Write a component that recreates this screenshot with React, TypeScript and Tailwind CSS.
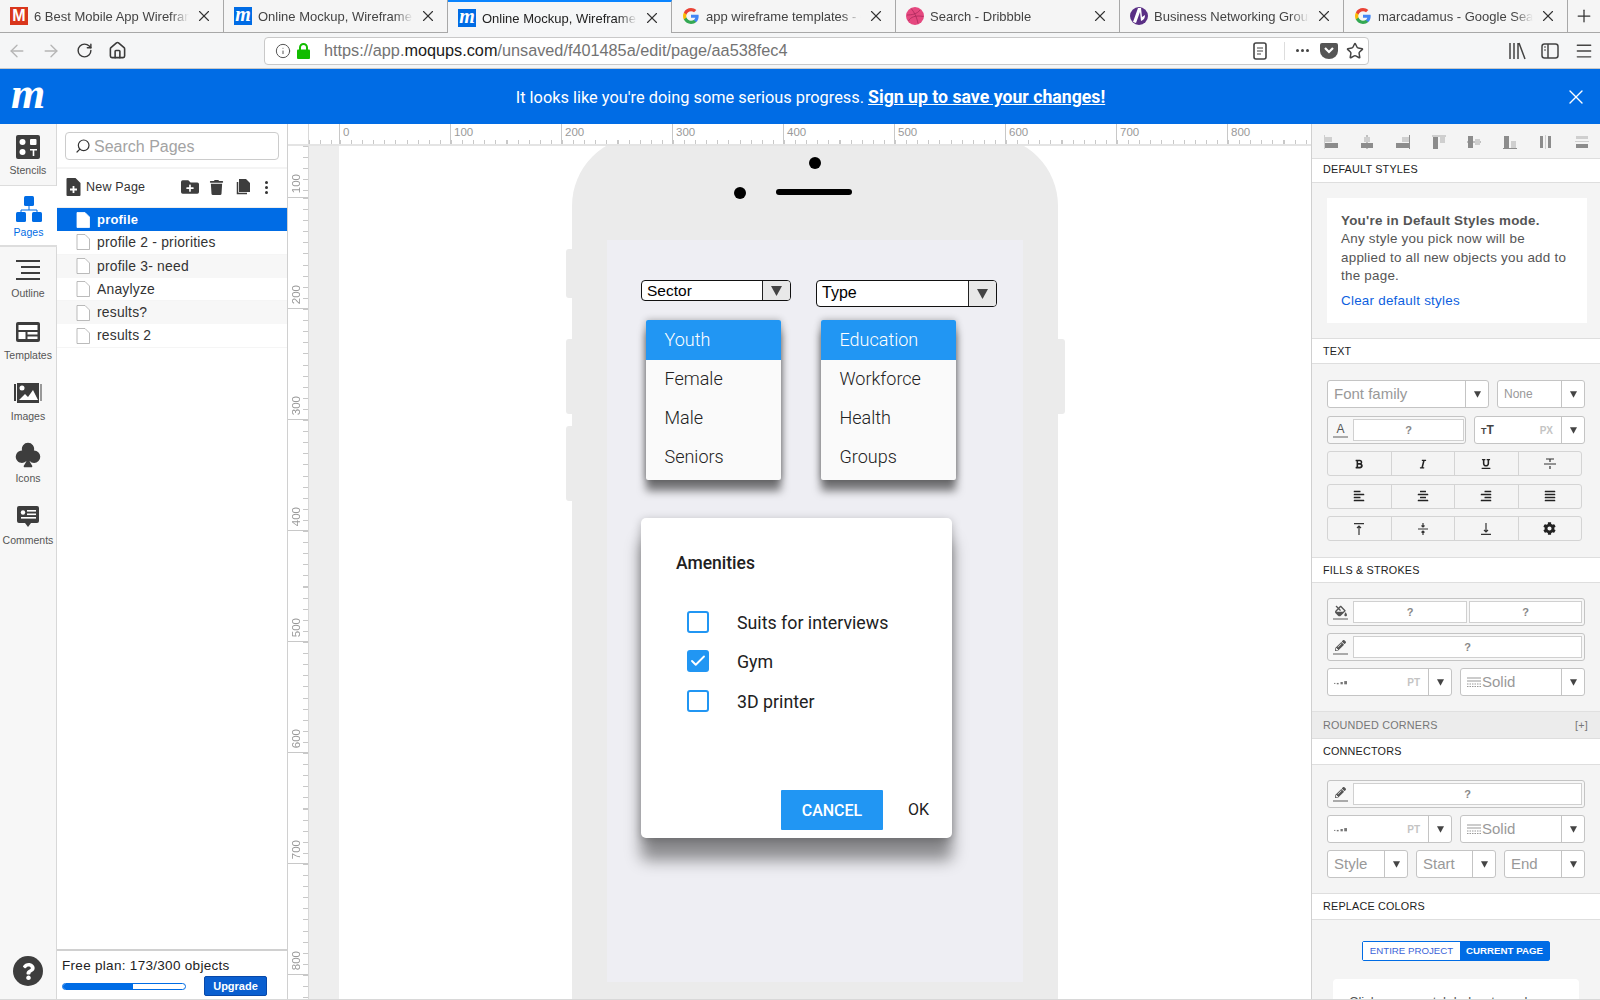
import React from "react";
import { ArrowLeft, ArrowRight, RotateCw, Home, Info, Star, X, Plus, Menu, Check, Search } from "lucide-react";
import { FaBold, FaItalic, FaUnderline, FaAlignLeft, FaAlignCenter, FaAlignRight, FaAlignJustify, FaCog, FaFolderPlus, FaTrash, FaFillDrip, FaPencilAlt, FaQuestion } from "react-icons/fa";
import { BsSuitClubFill } from "react-icons/bs";

const GoogleG = () => (
  <svg viewBox="0 0 24 24" className="w-[16px] h-[16px] shrink-0 ml-[1px] mr-[1px]">
    <path fill="#4285F4" d="M23.49 12.27c0-.79-.07-1.54-.19-2.27H12v4.51h6.47c-.29 1.48-1.14 2.73-2.4 3.58v3h3.86c2.26-2.09 3.56-5.17 3.56-8.82z" />
    <path fill="#34A853" d="M12 24c3.24 0 5.95-1.08 7.93-2.91l-3.86-3c-1.08.72-2.45 1.16-4.07 1.16-3.13 0-5.78-2.11-6.73-4.96H1.29v3.09C3.26 21.3 7.31 24 12 24z" />
    <path fill="#FBBC05" d="M5.27 14.29c-.25-.72-.38-1.49-.38-2.29s.14-1.57.38-2.29V6.62H1.29C.47 8.24 0 10.06 0 12s.47 3.76 1.29 5.38l3.98-3.09z" />
    <path fill="#EA4335" d="M12 4.75c1.77 0 3.35.61 4.6 1.8l3.42-3.42C17.95 1.19 15.24 0 12 0 7.31 0 3.26 2.7 1.29 6.62l3.98 3.09c.95-2.85 3.6-4.96 6.73-4.96z" />
  </svg>
);
const MFav = ({ red }: { red?: boolean }) =>
  red ? (
    <span className="w-[18px] h-[18px] shrink-0 bg-[#d9361c] text-white flex items-center justify-center text-[16px] font-bold leading-none">M</span>
  ) : (
    <span className="w-[18px] h-[18px] shrink-0 bg-[#006ce5] text-white flex items-center justify-center text-[20px] font-bold italic leading-none pb-[4px] font-['Liberation_Serif',serif]">m</span>
  );
const Dribbble = () => (
  <svg viewBox="0 0 18 18" className="w-[18px] h-[18px] shrink-0" fill="none">
    <circle cx="9" cy="9" r="9" fill="#e5487f" />
    <path d="M5 1.5c3 3 6 9 7 15M1 8c5 0 10-1 13-5M2.500 14c2-4 7-6 15-4.500" stroke="#a92a5a" strokeWidth="0.8" />
  </svg>
);
const Nsba = () => (
  <svg viewBox="0 0 18 18" className="w-[18px] h-[18px] shrink-0">
    <circle cx="9" cy="9" r="9" fill="#5a2f85" />
    <path d="M8 1 3 15l3 1 4-11 1 9c3-1 4-3 4-6l-3 2-1-9z" fill="#fff" />
  </svg>
);

const tabs: { icon: React.ReactNode; t: string; active?: boolean }[] = [
  { icon: <MFav red />, t: "6 Best Mobile App Wireframe" },
  { icon: <MFav />, t: "Online Mockup, Wireframe" },
  { icon: <MFav />, t: "Online Mockup, Wireframe", active: true },
  { icon: <GoogleG />, t: "app wireframe templates - Google" },
  { icon: <Dribbble />, t: "Search - Dribbble" },
  { icon: <Nsba />, t: "Business Networking Group" },
  { icon: <GoogleG />, t: "marcadamus - Google Search" },
];

function Tabs() {
  return (
    <div className="flex h-[33px] bg-[#f5f5f5] text-[13px] text-[#444]">
      {tabs.map((t, i) => (
        <div
          key={i}
          className={
            t.active
              ? "w-[224px] flex items-center pl-[10px] pr-[10px] gap-[6px] bg-[#f5f6f7] border-t-2 border-[#0a84ff] border-r border-r-[#a8a8a8] text-[#222]"
              : "w-[224px] flex items-center pl-[10px] pr-[10px] gap-[6px] border-b border-[#a8a8a8] border-r border-r-[#a8a8a8]"
          }
        >
          {t.icon}
          <span className="flex-1 pt-[2px] whitespace-nowrap overflow-hidden [mask-image:linear-gradient(to_right,black_88%,transparent)]">{t.t}</span>
          <X size={18} strokeWidth={1.500} className="shrink-0 text-[#333]" />
        </div>
      ))}
      <div className="flex-1 flex items-center justify-center border-b border-[#a8a8a8]">
        <Plus size={20} strokeWidth={1.500} className="text-[#333]" />
      </div>
    </div>
  );
}

function NavBar() {
  return (
    <div className="h-[36px] bg-[#f5f6f7] border-b border-[#c8c8c8] flex items-center text-[#444]">
      <div className="w-[264px] flex items-center pl-[7px]">
        <ArrowLeft size={20} strokeWidth={1.600} className="text-[#b5b5b5]" />
        <ArrowRight size={20} strokeWidth={1.600} className="text-[#b5b5b5] ml-[14px]" />
        <RotateCw size={17} strokeWidth={2} className="ml-[15px] text-[#3a3a3a]" />
        <Home size={19} strokeWidth={2} className="ml-[15px] text-[#3a3a3a]" />
      </div>
      <div className="w-[1105px] h-[28px] bg-white border border-[#c9c9c9] rounded-[4px] flex items-center pl-[10px] pr-[4px]">
        <Info size={16} strokeWidth={1.500} className="text-[#555]" />
        <svg viewBox="0 0 13 16" className="w-[13px] h-[16px] ml-[6px]">
          <rect x="0" y="6.500" width="13" height="9.500" rx="1" fill="#12bc00" />
          <path d="M3 7V4.500a3.500 3.500 0 0 1 7 0V7" fill="none" stroke="#12bc00" strokeWidth="2" />
        </svg>
        <span className="ml-[14px] text-[16.250px] text-[#737373] whitespace-nowrap">
          https://app.<span className="text-[#1a1a1a]">moqups.com</span>/unsaved/f401485a/edit/page/aa538fec4
        </span>
        <span className="flex-1" />
        <svg viewBox="0 0 14 18" className="w-[14px] h-[18px] text-[#444]" fill="none" stroke="currentColor" strokeWidth="1.600">
          <rect x="1" y="1" width="12" height="16" rx="2" />
          <path d="M4 6h6M4 9h6M4 12h4" strokeWidth="1.100" />
        </svg>
        <span className="w-px h-[18px] bg-[#ddd] ml-[17px]" />
        <span className="flex gap-[2px] ml-[11px]">
          <i className="w-[3px] h-[3px] bg-[#444] rounded-full" />
          <i className="w-[3px] h-[3px] bg-[#444] rounded-full" />
          <i className="w-[3px] h-[3px] bg-[#444] rounded-full" />
        </span>
        <svg viewBox="0 0 18 16" className="w-[18px] h-[16px] ml-[11px]">
          <path d="M2 0h14a2 2 0 0 1 2 2v6a9 8 0 0 1-18 0V2a2 2 0 0 1 2-2z" fill="#555" />
          <path d="M5 5l4 4 4-4" fill="none" stroke="#fff" strokeWidth="2.200" />
        </svg>
        <Star size={18} strokeWidth={2} className="ml-[8px] text-[#444]" />
      </div>
      <div className="flex items-center ml-[139px]">
        <svg viewBox="0 0 18 18" className="w-[18px] h-[18px]" fill="none" stroke="#444" strokeWidth="1.500">
          <path d="M2 1v16M6 1v16M10 1v16M11 1l6 16" />
        </svg>
        <svg viewBox="0 0 18 18" className="w-[18px] h-[18px] ml-[15px]" fill="none" stroke="#444" strokeWidth="1.500">
          <rect x="1" y="2" width="16" height="14" rx="2.500" />
          <path d="M7 2v14" />
          <path d="M3 5h2M3 8h2" strokeWidth="1" />
        </svg>
        <Menu size={20} strokeWidth={1.700} className="ml-[15px] text-[#444]" />
      </div>
    </div>
  );
}

function Banner() {
  return (
    <div className="h-[55px] bg-[#006ce5] flex items-center text-white shrink-0">
      <span className="w-[60px] pl-[11px] font-['Liberation_Serif',serif] font-bold italic text-[44px] leading-none pb-[6px]">m</span>
      <div className="flex-1 text-center text-[16.350px] pr-[3px] pt-[1px] font-['Roboto',sans-serif]">
        It looks like you're doing some serious progress. <span className="text-[17.700px] font-bold underline">Sign up to save your changes!</span>
      </div>
      <X size={24} strokeWidth={1.400} className="mr-[12px]" />
    </div>
  );
}

const ic = "#3d3d3d";
const railItems: { l: string; icon: React.ReactNode; active?: boolean }[] = [
  {
    l: "Stencils",
    icon: (
      <svg viewBox="0 0 24 24" className="w-[24px] h-[24px]">
        <rect width="24" height="24" rx="2" fill={ic} />
        <circle cx="6.500" cy="7" r="3" fill="#fff" />
        <rect x="14" y="4" width="6.500" height="6" rx="1" fill="#fff" />
        <circle cx="6.500" cy="17" r="3" fill="#fff" />
        <path d="M14 14h7v1.500h-2.700V21h-1.600v-5.500H14z" fill="#fff" />
      </svg>
    ),
  },
  {
    l: "Pages",
    active: true,
    icon: (
      <svg viewBox="0 0 26 26" className="w-[26px] h-[26px]">
        <rect x="8" y="0" width="10" height="10" rx="1.500" fill="#006ce5" />
        <path d="M13 10v4M5 17v-3h16v3" stroke="#006ce5" fill="none" strokeWidth="1" />
        <rect x="0" y="16" width="10" height="10" rx="1.500" fill="#006ce5" />
        <rect x="16" y="16" width="10" height="10" rx="1.500" fill="#006ce5" />
      </svg>
    ),
  },
  {
    l: "Outline",
    icon: (
      <svg viewBox="0 0 24 20" className="w-[24px] h-[20px]" fill={ic}>
        <rect y="0" width="24" height="2" />
        <rect x="5" y="6" width="19" height="2" />
        <rect x="5" y="12" width="19" height="2" />
        <rect y="18" width="24" height="2" />
      </svg>
    ),
  },
  {
    l: "Templates",
    icon: (
      <svg viewBox="0 0 24 20" className="w-[24px] h-[20px]">
        <rect width="24" height="20" rx="2" fill={ic} />
        <rect x="2.500" y="3" width="19" height="5" fill="#fff" />
        <rect x="2.500" y="10" width="7" height="7" fill="#fff" />
        <rect x="11.500" y="10" width="10" height="2.500" fill="#fff" />
        <rect x="11.500" y="14.500" width="10" height="2.500" fill="#fff" />
      </svg>
    ),
  },
  {
    l: "Images",
    icon: (
      <svg viewBox="0 0 28 20" className="w-[28px] h-[20px]">
        <rect x="0" y="1" width="2" height="17" fill={ic} />
        <rect x="26" y="1" width="2" height="17" fill="#999" />
        <rect x="3" y="0" width="22" height="20" fill={ic} />
        <circle cx="8" cy="5" r="2.500" fill="#fff" />
        <path d="M5 17l6-6 3 3 5-7 5 10z" fill="#fff" />
      </svg>
    ),
  },
  { l: "Icons", icon: <BsSuitClubFill size={28} color={ic} /> },
  {
    l: "Comments",
    icon: (
      <svg viewBox="0 0 22 21" className="w-[22px] h-[21px]">
        <path d="M2 0h18a2 2 0 0 1 2 2v13a2 2 0 0 1-2 2h-6l-3 4-3-4H2a2 2 0 0 1-2-2V2a2 2 0 0 1 2-2z" fill={ic} />
        <circle cx="6" cy="6.500" r="2.200" fill="#fff" />
        <rect x="10" y="4" width="9" height="1.600" fill="#fff" />
        <rect x="10" y="7.500" width="9" height="1.600" fill="#fff" />
        <rect x="4" y="11" width="15" height="1.600" fill="#fff" />
      </svg>
    ),
  },
];

function Rail() {
  return (
    <div className="w-[57px] shrink-0 bg-[#f7f7f7] border-r border-[#d8d8d8] flex flex-col text-[10.500px] text-[#555] relative">
      {railItems.map((r) => (
        <div
          key={r.l}
          className={
            r.active
              ? "h-[61px] flex flex-col items-center bg-white text-[#006ce5] border-b-2 border-[#ddd] -mr-px z-10"
              : r.l === "Stencils"
              ? "h-[62px] flex flex-col items-center border-b border-[#ddd]"
              : "h-[61.700px] flex flex-col items-center"
          }
        >
          <div className="h-[40px] pt-[6px] flex items-center justify-center shrink-0">{r.icon}</div>
          <div className="leading-[12px]">{r.l}</div>
        </div>
      ))}
      <div className="flex-1 flex items-end justify-center pb-[13px]">
        <span className="w-[30px] h-[30px] rounded-full bg-[#3d3d3d] flex items-center justify-center text-white">
          <FaQuestion size={17} />
        </span>
      </div>
    </div>
  );
}

const DocIcon = ({ filled }: { filled?: boolean }) => (
  <svg viewBox="0 0 14 16" className="w-[14px] h-[16px] shrink-0" fill="#fff" stroke={filled ? "#fff" : "#aaa"} strokeWidth="0.800">
    <path d="M1 .500h8l4.500 4.500v10.500H1z" />
  </svg>
);

const pages = ["profile", "profile 2 - priorities", "profile 3- need", "Anaylyze", "results?", "results 2"];

function PagesPanel() {
  return (
    <div className="w-[231px] shrink-0 bg-white border-r border-[#d0d0d0] flex flex-col">
      <div className="h-[45px] px-[8px] pt-[8px] border-b-2 border-[#f4f4f4] shrink-0">
        <div className="h-[28px] border border-[#ccc] rounded-[4px] flex items-center pl-[9px] text-[16px] text-[#a3a3a3]">
          <Search size={16} strokeWidth={1.800} className="text-[#333] -scale-x-100 mr-[3px]" />
          <span className="pt-[1px]">Search Pages</span>
        </div>
      </div>
      <div className="h-[38px] flex items-center pl-[9px] pr-[19px] pb-[2px] text-[#333] shrink-0 text-[12.500px]">
        <svg viewBox="0 0 14 18" className="w-[15px] h-[18px] shrink-0">
          <path d="M1 0h8l5 5v12a1 1 0 0 1-1 1H1a1 1 0 0 1-1-1V1a1 1 0 0 1 1-1z" fill={ic} />
          <path d="M7 8v7M3.500 11.500h7" stroke="#fff" strokeWidth="1.800" />
        </svg>
        <span className="ml-[5px] tracking-[0.2px]">New Page</span>
        <span className="flex-1" />
        <FaFolderPlus size={18} color={ic} />
        <FaTrash size={15} color={ic} className="ml-[10px]" />
        <svg viewBox="0 0 16 16" className="w-[16px] h-[16px] ml-[11px]">
          <path d="M4 0h7l4 4v9H4z" fill={ic} />
          <path d="M2.500 3v11.500H12" fill="none" stroke={ic} strokeWidth="1.500" />
        </svg>
        <span className="ml-[14px] flex flex-col gap-[2px]">
          <i className="w-[3px] h-[3px] bg-[#333] rounded-full" />
          <i className="w-[3px] h-[3px] bg-[#333] rounded-full" />
          <i className="w-[3px] h-[3px] bg-[#333] rounded-full" />
        </span>
      </div>
      <div className="flex flex-col text-[13.900px] tracking-[0.2px] text-[#333] border-t border-[#eee]">
        {pages.map((p, i) => (
          <div
            key={p}
            className={
              i === 0
                ? "h-[23.300px] flex items-center pl-[19px] gap-[7px] bg-[#006ce5] text-white text-[13px] font-bold"
                : i === 2 || i === 4
                ? "h-[23.300px] flex items-center pl-[19px] gap-[7px] bg-[#f7f7f7]"
                : "h-[23.300px] flex items-center pl-[19px] gap-[7px] border-b border-[#f5f5f5]"
            }
          >
            <DocIcon filled={i === 0} />
            <span>{p}</span>
          </div>
        ))}
      </div>
      <div className="flex-1" />
      <div className="h-[50px] border-t-2 border-[#d0d0d0] shrink-0 pl-[5px] pr-[20px] pt-[7px] text-[13.500px] text-[#222] tracking-[0.3px]">
        <div className="leading-[16px]">Free plan: 173/300 objects</div>
        <div className="flex items-center justify-between mt-[2px]">
          <div className="w-[124px] h-[7px] rounded-full border border-[#006ce5] overflow-hidden">
            <div className="h-full bg-[#006ce5]" style={{ width: "57%" }} />
          </div>
          <div className="w-[63px] h-[20px] rounded-[2px] bg-[#0a5fd0] border border-[#0848a8] text-white text-[11px] tracking-normal font-bold flex items-center justify-center">Upgrade</div>
        </div>
      </div>
    </div>
  );
}

const hTicks =
  "bg-[repeating-linear-gradient(90deg,#c8c8c8_0,#c8c8c8_1px,transparent_1px,transparent_11.100px)] bg-[length:100%_4px] bg-bottom bg-no-repeat";
const vTicks =
  "bg-[repeating-linear-gradient(180deg,#c8c8c8_0,#c8c8c8_1px,transparent_1px,transparent_11.100px)] bg-[length:5px_100%] bg-right bg-no-repeat";

function HRuler() {
  return (
    <div className="h-[22px] flex border-b-2 border-[#e4e4e4] shrink-0 overflow-hidden bg-white text-[11.500px] text-[#9a9a9a]">
      <div className="w-[21px] shrink-0 border-r border-[#d8d8d8]" />
      <div className={"w-[30px] shrink-0 " + hTicks} />
      {[0, 100, 200, 300, 400, 500, 600, 700, 800].map((n) => (
        <div key={n} className={"w-[111px] shrink-0 border-l border-[#c8c8c8] pl-[3px] pt-[1px] leading-[14px] " + hTicks}>
          {n}
        </div>
      ))}
    </div>
  );
}

function VRuler() {
  return (
    <div className="w-[21px] shrink-0 bg-white border-r border-[#d8d8d8] flex flex-col overflow-hidden text-[11.500px] text-[#9a9a9a]">
      <div className={"h-[52px] shrink-0 border-b border-[#c8c8c8] flex flex-col justify-end pb-[4px] pl-[2px] " + vTicks}>
        <span className="[writing-mode:vertical-rl] rotate-180 leading-[12px]">100</span>
      </div>
      {[200, 300, 400, 500, 600, 700, 800].map((n) => (
        <div key={n} className={"h-[111px] shrink-0 border-b border-[#c8c8c8] flex flex-col justify-end pb-[4px] pl-[2px] " + vTicks}>
          <span className="[writing-mode:vertical-rl] rotate-180 leading-[12px]">{n}</span>
        </div>
      ))}
      <div className={"flex-1 " + vTicks} />
    </div>
  );
}

const Caret = ({ dark }: { dark?: boolean }) => (
  <svg viewBox="0 0 10 9" className={dark ? "w-[11px] h-[10px]" : "w-[7px] h-[7px]"}>
    <path d="M0 0h10L5 9z" fill="#444" />
  </svg>
);

function MiniSelect({ label, cls, divCls, labelCls }: { label: string; cls: string; divCls: string; labelCls: string }) {
  return (
    <div className={"absolute bg-white border border-[#111] rounded-[4px] flex overflow-hidden font-['Liberation_Sans',sans-serif] text-black " + cls}>
      <span className={"flex-1 leading-none pl-[5px] " + labelCls}>{label}</span>
      <span className={"bg-[#e8e8e8] border-l border-[#222] flex items-center justify-center " + divCls}>
        <Caret dark />
      </span>
    </div>
  );
}

function DropList({ cls, items }: { cls: string; items: string[] }) {
  return (
    <div className={"absolute w-[135px] h-[160px] bg-[#fafafa] rounded-[2px] shadow-[0_11px_9px_rgba(0,0,0,0.5),0_0_7px_rgba(0,0,0,0.3)] font-['Roboto',sans-serif] text-[18px] font-light text-[#222] " + cls}>
      <div className="h-[40px] bg-[#2196f3] text-white rounded-t-[2px] flex items-center pl-[18.500px] pb-[1px]">{items[0]}</div>
      {items.slice(1).map((t) => (
        <div key={t} className="h-[39px] flex items-center pl-[18.500px] pb-[3px]">
          {t}
        </div>
      ))}
    </div>
  );
}

function Check1({ label, checked }: { label: string; checked?: boolean }) {
  return (
    <div className="h-[39.500px] flex items-center">
      <span className={checked ? "w-[22px] h-[22px] rounded-[3px] bg-[#2196f3] flex items-center justify-center" : "w-[22px] h-[22px] rounded-[3px] border-2 border-[#2196f3] bg-white"}>
        {checked && <Check size={18} strokeWidth={2.500} color="#fff" />}
      </span>
      <span className="ml-[28px] pt-[3px]">{label}</span>
    </div>
  );
}

function Canvas() {
  return (
    <div className="flex-1 flex min-w-0 overflow-hidden">
      <div className="w-[30px] shrink-0 bg-[#eeeeee]" />
      <div className="flex-1 relative bg-white overflow-hidden">
        <div className="absolute left-[227px] top-[103px] w-[7px] h-[49px] bg-[#ebebeb] rounded-l-[3px]" />
        <div className="absolute left-[227px] top-[193px] w-[7px] h-[75px] bg-[#ebebeb] rounded-l-[3px]" />
        <div className="absolute left-[227px] top-[280px] w-[7px] h-[75px] bg-[#ebebeb] rounded-l-[3px]" />
        <div className="absolute left-[718px] top-[193px] w-[8px] h-[75px] bg-[#ebebeb] rounded-r-[3px]" />
        <div className="absolute left-[233px] -top-[10px] w-[486px] h-[870px] bg-[#ebebeb] rounded-t-[70px]" />
        <div className="absolute left-[470px] top-[11px] w-[12px] h-[12px] rounded-full bg-black" />
        <div className="absolute left-[395px] top-[41px] w-[12px] h-[12px] rounded-full bg-black" />
        <div className="absolute left-[437px] top-[43px] w-[76px] h-[6px] rounded-full bg-black" />
        <div className="absolute left-[268px] top-[94px] w-[416px] h-[742px] bg-[#eeeef3]" />

        <MiniSelect label="Sector" cls="left-[302px] top-[134px] w-[150px] h-[21px]" divCls="w-[28px]" labelCls="text-[15.500px] pt-[2px]" />
        <MiniSelect label="Type" cls="left-[477px] top-[134px] w-[181px] h-[27px]" divCls="w-[28px]" labelCls="text-[16px] pt-[4px]" />

        <DropList cls="left-[307px] top-[174px]" items={["Youth", "Female", "Male", "Seniors"]} />
        <DropList cls="left-[482px] top-[174px]" items={["Education", "Workforce", "Health", "Groups"]} />

        <div className="absolute left-[302px] top-[372px] w-[311px] h-[320px] bg-white rounded-[5px] shadow-[0_22px_16px_rgba(0,0,0,0.42),0_2px_10px_rgba(0,0,0,0.25)] font-['Roboto',sans-serif] text-[#212121] flex flex-col pl-[35px] pr-[23px]">
          <div className="text-[17.500px] font-medium mt-[35px] leading-[20px]">Amenities</div>
          <div className="mt-[29px] ml-[11px] text-[17.800px] flex flex-col">
            <Check1 label="Suits for interviews" />
            <Check1 label="Gym" checked />
            <Check1 label="3D printer" />
          </div>
          <div className="flex-1" />
          <div className="flex items-center justify-end mb-[8px] text-[16px]">
            <div className="w-[102px] h-[40px] pt-[2px] bg-[#2196f3] rounded-[1px] text-white font-medium flex items-center justify-center">CANCEL</div>
            <div className="ml-[25px]">OK</div>
          </div>
        </div>
      </div>
    </div>
  );
}

const AL = "#8c8c8c";
const LT = "#cfcfcf";
const alignIcons = [
  [[0, 0, 1, 14, LT], [1, 8, 13, 5, AL], [1, 2, 7, 5, LT]],
  [[6.500, 0, 1, 14, AL], [1, 8, 12, 5, AL], [4, 2, 6, 5, LT]],
  [[13, 0, 1, 14, AL], [0, 8, 13, 5, AL], [6, 2, 7, 5, LT]],
  [[0, 0, 14, 2, LT], [1, 2, 5, 12, AL], [8, 2, 5, 6, LT]],
  [[0, 6.500, 14, 1, AL], [1, 1, 5, 12, AL], [8, 4, 5, 6, LT]],
  [[0, 13, 14, 1, AL], [1, 1, 5, 12, AL], [8, 6, 5, 7, LT]],
  [[1, 1, 3, 12, AL], [6, 0, 1, 14, LT], [9, 1, 3, 12, AL]],
  [[1, 1, 12, 3, LT], [0, 6, 14, 1, LT], [1, 9, 12, 4, AL]],
];

function Header({ t, cls }: { t: string; cls: string }) {
  return <div className={"bg-white border-y border-[#dedede] flex items-center pl-[11px] text-[10.800px] font-medium tracking-[0.2px] text-[#222] shrink-0 " + cls}>{t}</div>;
}

function Sel({ w, dw = 23, label, small, right }: { w: string; dw?: number; label?: React.ReactNode; small?: boolean; right?: string }) {
  return (
    <div className={"h-[28px] bg-white border border-[#c4c4c4] rounded-[3px] flex items-center shrink-0 " + w}>
      <span className={small ? "flex-1 pl-[6px] text-[12px] text-[#999] flex items-center" : "flex-1 pl-[6px] text-[15px] text-[#999] flex items-center"}>
        {label}
        {right && <span className="ml-auto pr-[8px] text-[10px] font-bold text-[#c4c4c4]">{right}</span>}
      </span>
      <span className="h-full border-l border-[#c4c4c4] flex items-center justify-center" style={{ width: dw }}>
        <Caret />
      </span>
    </div>
  );
}

function Swatch({ icon }: { icon: React.ReactNode }) {
  return (
    <span className="w-[25px] shrink-0 h-full flex flex-col items-center justify-center">
      <span className="text-[#555] leading-none h-[13px] flex items-center">{icon}</span>
      <span className="w-[15px] h-[2px] bg-[#aaa] mt-[1px]" />
    </span>
  );
}

function Q({ cls }: { cls: string }) {
  return <span className={"h-[22px] bg-white border border-[#d0d0d0] text-[#888] text-[11px] font-bold flex items-center justify-center " + cls}>?</span>;
}

const VIcon = ({ kind }: { kind: number }) => (
  <svg viewBox="0 0 12 12" className="w-[12px] h-[12px]" stroke="#333" strokeWidth="1.200" fill="none">
    {kind === 0 && <path d="M1 .700h10M6 3v9M4 5l2-2 2 2" />}
    {kind === 1 && <path d="M1 6h10M6 0v4M4.500 2.500 6 4l1.500-1.500M6 12V8M4.500 9.500 6 8l1.500 1.500" />}
    {kind === 2 && <path d="M1 11.300h10M6 0v9M4 7l2 2 2-2" />}
  </svg>
);
const StrikeIcon = () => (
  <svg viewBox="0 0 12 12" className="w-[12px] h-[12px]" stroke="#333" strokeWidth="1.200" fill="none">
    <path d="M0 6h12M2 1h8M6 1v3M6 8v3" />
  </svg>
);

function BtnGroup({ items }: { items: React.ReactNode[] }) {
  return (
    <div className="w-[255px] h-[25px] flex border border-[#d4d4d4] rounded-[3px] bg-[#f4f4f4] text-[#222]">
      {items.map((n, i) => (
        <span key={i} className={i ? "flex-1 flex items-center justify-center border-l border-[#d4d4d4]" : "flex-1 flex items-center justify-center"}>
          {n}
        </span>
      ))}
    </div>
  );
}

const LineIcon = () => (
  <svg viewBox="0 0 14 6" className="w-[13px] h-[6px]" fill="#777">
    <rect x="0" y="4" width="1.500" height="1" />
    <rect x="3" y="4" width="2" height="1.500" />
    <rect x="7" y="3" width="2.500" height="2.500" />
    <rect x="11" y="2" width="3" height="3.500" />
  </svg>
);
const SolidIcon = () => (
  <svg viewBox="0 0 14 10" className="w-[14px] h-[10px] mr-[1px]" stroke="#999" strokeWidth="1">
    <path d="M0 1h14M0 4h14" />
    <path d="M0 7h14M0 9.500h14" strokeDasharray="1.500 1" />
  </svg>
);

function RightPanel() {
  return (
    <div className="w-[289px] shrink-0 bg-[#f4f4f4] border-l border-[#d0d0d0] flex flex-col overflow-hidden">
      <div className="h-[34px] flex items-center justify-between pl-[12px] pr-[11px] pt-[2px] shrink-0">
        {alignIcons.map((r, i) => (
          <svg key={i} viewBox="0 0 14 14" className="w-[14px] h-[14px]">
            {r.map((a, j) => (
              <rect key={j} x={a[0] as number} y={a[1] as number} width={a[2] as number} height={a[3] as number} fill={a[4] as string} />
            ))}
          </svg>
        ))}
      </div>
      <Header t="DEFAULT STYLES" cls="h-[25px] pb-[2px]" />
      <div className="h-[155px] pl-[15px] pr-[13px] pt-[15px] shrink-0">
        <div className="h-[125px] bg-white pl-[14px] pt-[14px] text-[13.400px] leading-[18.300px] text-[#555] tracking-[0.25px]">
          <div className="font-bold">You're in Default Styles mode.</div>
          <div>Any style you pick now will be</div>
          <div>applied to all new objects you add to</div>
          <div>the page.</div>
          <div className="text-[#0d5fe0] mt-[7px]">Clear default styles</div>
        </div>
      </div>
      <Header t="TEXT" cls="h-[26px]" />
      <div className="h-[193px] pl-[15px] pt-[16px] shrink-0 flex flex-col">
        <div className="flex gap-[8px]">
          <Sel w="w-[162px]" label="Font family" />
          <Sel w="w-[88px]" label="None" small />
        </div>
        <div className="flex gap-[8px] mt-[8px]">
          <div className="w-[139px] h-[28px] border border-[#c4c4c4] rounded-[3px] flex items-center pr-[1px] bg-[#f7f7f7]">
            <Swatch icon={<span className="text-[12px]">A</span>} />
            <Q cls="flex-1" />
          </div>
          <Sel
            w="w-[111px]"
            small
            label={
              <span className="text-[#444] font-bold flex items-end leading-none">
                <span className="text-[9px]">T</span>
                <span className="text-[12px]">T</span>
              </span>
            }
            right="PX"
          />
        </div>
        <div className="flex flex-col gap-[7.500px] mt-[7px]">
          <BtnGroup items={[<FaBold size={10} />, <FaItalic size={10} />, <FaUnderline size={10} />, <StrikeIcon />]} />
          <BtnGroup items={[<FaAlignLeft size={12} />, <FaAlignCenter size={12} />, <FaAlignRight size={12} />, <FaAlignJustify size={12} />]} />
          <BtnGroup items={[<VIcon kind={0} />, <VIcon kind={1} />, <VIcon kind={2} />, <FaCog size={13} />]} />
        </div>
      </div>
      <Header t="FILLS & STROKES" cls="h-[26px]" />
      <div className="h-[128px] pl-[15px] pt-[15px] shrink-0 flex flex-col">
        <div className="w-[258px] h-[28px] border border-[#c4c4c4] rounded-[3px] flex items-center pr-[2px] bg-[#f7f7f7]">
          <Swatch icon={<FaFillDrip size={12} />} />
          <Q cls="w-[114px]" />
          <Q cls="flex-1 ml-[2px]" />
        </div>
        <div className="w-[258px] h-[28px] border border-[#c4c4c4] rounded-[3px] flex items-center pr-[2px] bg-[#f7f7f7] mt-[7px]">
          <Swatch icon={<FaPencilAlt size={11} />} />
          <Q cls="flex-1" />
        </div>
        <div className="flex gap-[8px] mt-[7px]">
          <Sel w="w-[125px]" small label={<LineIcon />} right="PT" />
          <Sel w="w-[125px]" label={<><SolidIcon />Solid</>} />
        </div>
      </div>
      <div className="h-[27px] bg-[#ececec] border-t border-[#e0e0e0] flex items-center justify-between pl-[11px] pr-[12px] text-[10.800px] font-medium tracking-[0.2px] text-[#777] shrink-0">
        <span>ROUNDED CORNERS</span>
        <span className="font-normal">[+]</span>
      </div>
      <Header t="CONNECTORS" cls="h-[27px]" />
      <div className="h-[128px] pl-[15px] pt-[15px] shrink-0 flex flex-col">
        <div className="w-[258px] h-[28px] border border-[#c4c4c4] rounded-[3px] flex items-center pr-[2px] bg-[#f7f7f7]">
          <Swatch icon={<FaPencilAlt size={11} />} />
          <Q cls="flex-1" />
        </div>
        <div className="flex gap-[8px] mt-[7px]">
          <Sel w="w-[125px]" small label={<LineIcon />} right="PT" />
          <Sel w="w-[125px]" label={<><SolidIcon />Solid</>} />
        </div>
        <div className="flex gap-[8px] mt-[7px]">
          <Sel w="w-[81px]" label="Style" />
          <Sel w="w-[80px]" label="Start" />
          <Sel w="w-[81px]" label="End" />
        </div>
      </div>
      <Header t="REPLACE COLORS" cls="h-[27px]" />
      <div className="flex-1 flex flex-col items-center pt-[21px]">
        <div className="w-[188px] h-[20px] border border-[#006ce5] rounded-[2px] flex text-[9.700px] font-medium shrink-0">
          <span className="w-[97px] bg-white text-[#3a62d8] flex items-center justify-center">ENTIRE PROJECT</span>
          <span className="flex-1 bg-[#006ce5] text-white font-bold flex items-center justify-center">CURRENT PAGE</span>
        </div>
        <div className="w-[246px] flex-1 bg-white rounded-t-[4px] mt-[18px] pt-[13px] pl-[16px] text-[13px] text-[#555] whitespace-nowrap overflow-hidden">
          Click on a swatch below to replace
        </div>
      </div>
    </div>
  );
}

export default function App() {
  return (
    <div className="w-[1600px] h-[1000px] overflow-hidden flex flex-col bg-white font-['Liberation_Sans',Arial,sans-serif]">
      <Tabs />
      <NavBar />
      <Banner />
      <div className="flex-1 flex min-h-0 border-b border-[#d8d8d8]">
        <Rail />
        <PagesPanel />
        <div className="flex-1 flex flex-col min-w-0">
          <HRuler />
          <div className="flex-1 flex min-h-0">
            <VRuler />
            <Canvas />
          </div>
        </div>
        <RightPanel />
      </div>
    </div>
  );
}
